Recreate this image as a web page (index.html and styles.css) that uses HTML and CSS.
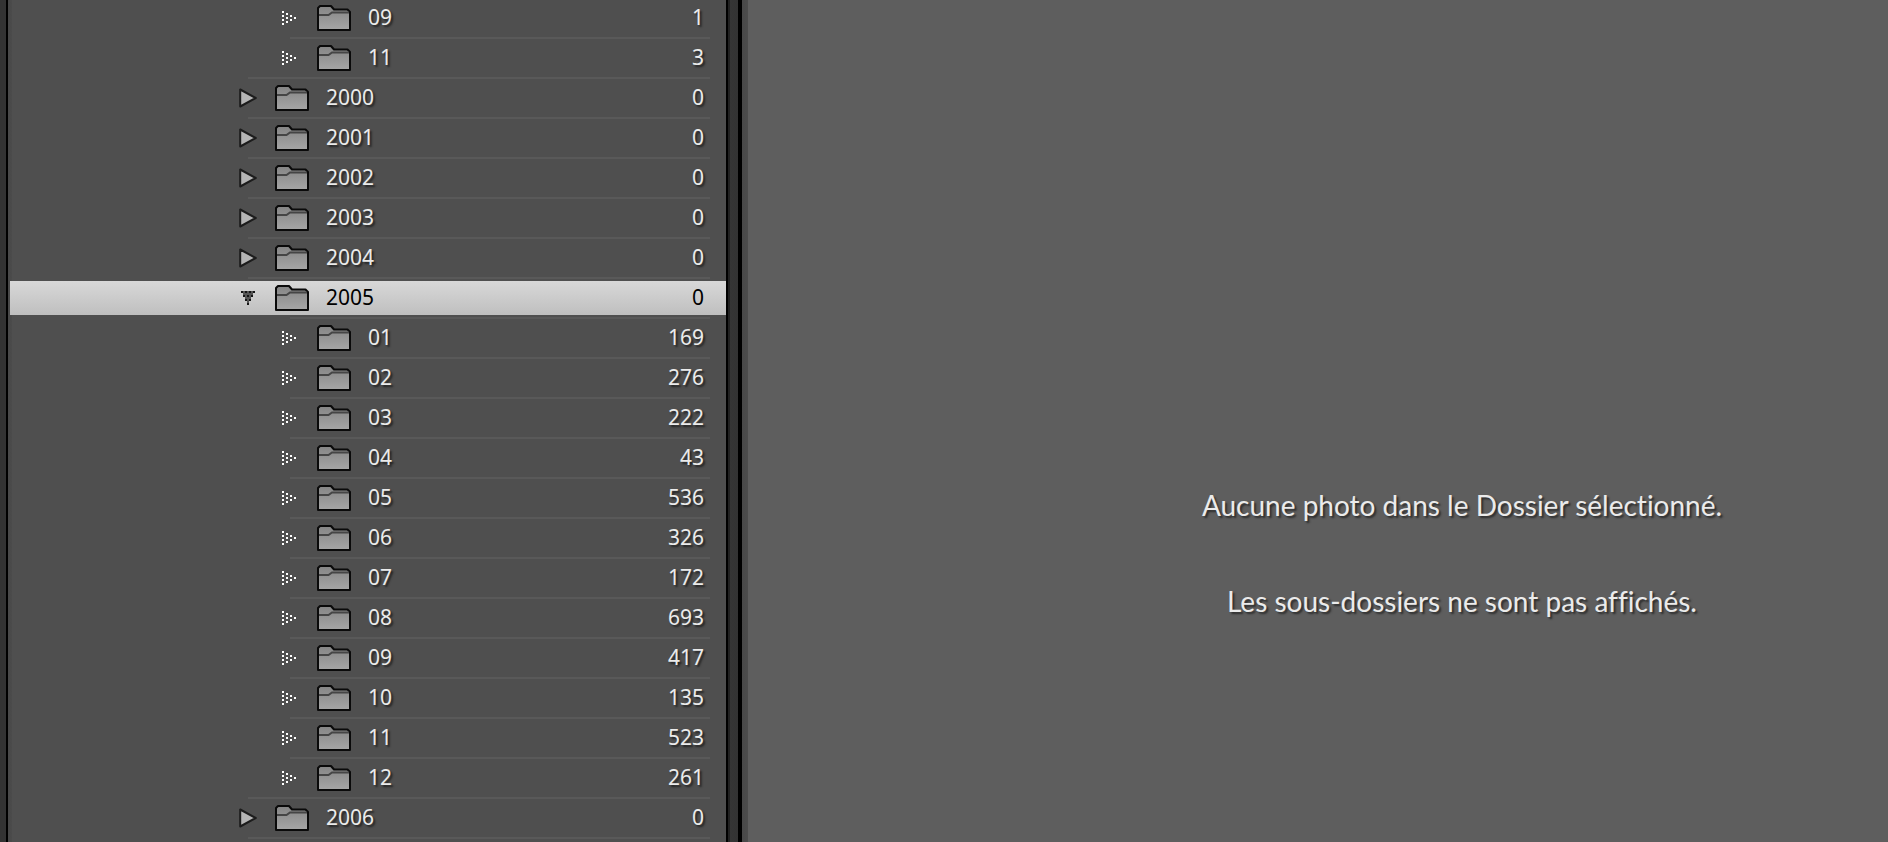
FILE: index.html
```html
<!DOCTYPE html>
<html lang="fr">
<head>
<meta charset="utf-8">
<title>Dossiers</title>
<link rel="stylesheet" href="styles.css">
</head>
<body>
<svg class="defs" aria-hidden="true">
  <defs>
    <linearGradient id="fill" x1="0" y1="0" x2="0" y2="1">
      <stop offset="0" stop-color="#858585"/>
      <stop offset="1" stop-color="#a6a6a6"/>
    </linearGradient>
    <symbol id="folder" viewBox="0 0 34 26">
      <path d="M1 3L3 1H14L17 4.500H30.500L33 7V25H1Z" fill="url(#fill)" stroke="#0a0a0a" stroke-width="2" stroke-linejoin="round"/>
      <path d="M2 10H11.500L15 7.500H32" fill="none" stroke="#454545" stroke-width="2"/>
    </symbol>
    <symbol id="closed" viewBox="0 0 18 20">
      <path d="M1.200 1.500V18.500L16.800 10Z" fill="#b4b4b4" stroke="#1c1c1c" stroke-width="2" stroke-linejoin="round"/>
    </symbol>
    <symbol id="leaf" viewBox="0 0 14 14">
      <path d="M0 0h2v2h-2zM0 4h2v2h-2zM0 8h2v2h-2zM0 12h2v2h-2zM4 2h2v2h-2zM4 6h2v2h-2zM4 10h2v2h-2zM8 4h2v2h-2zM8 8h2v2h-2zM12 6h2v2h-2z" fill="#fff"/>
    </symbol>
    <symbol id="open" viewBox="0 0 14 14">
      <path d="M0 0H14V2H12V6H10V10H8V14H6V10H4V6H2V2H0Z" fill="#555"/>
      <path d="M0 0h2v2h-2zM4 0h2v2h-2zM8 0h2v2h-2zM12 0h2v2h-2zM2 4h2v2h-2zM6 4h2v2h-2zM10 4h2v2h-2zM4 8h2v2h-2zM8 8h2v2h-2zM6 12h2v2h-2z" fill="#161616"/>
    </symbol>
  </defs>
</svg>
<div class="app">
  <nav class="panel" aria-label="Dossiers"><ul class="tree" id="tree"></ul></nav>
  <div class="divider"></div>
  <main class="content">
    <p>Aucune photo dans le Dossier sélectionné.</p>
    <p>Les sous-dossiers ne sont pas affichés.</p>
  </main>
</div>
<script src="tree.js"></script>
</body>
</html>
```
FILE: tree.js
```js
const rows = [
  ["leaf", "09", 1], ["leaf", "11", 3],
  ["closed", "2000", 0], ["closed", "2001", 0], ["closed", "2002", 0],
  ["closed", "2003", 0], ["closed", "2004", 0], ["open", "2005", 0],
  ["leaf", "01", 169], ["leaf", "02", 276], ["leaf", "03", 222],
  ["leaf", "04", 43], ["leaf", "05", 536], ["leaf", "06", 326],
  ["leaf", "07", 172], ["leaf", "08", 693], ["leaf", "09", 417],
  ["leaf", "10", 135], ["leaf", "11", 523], ["leaf", "12", 261],
  ["closed", "2006", 0]
];
document.getElementById("tree").innerHTML = rows.map(([kind, name, count]) => `
  <li class="item ${kind}">
    <button class="row" type="button">
      <span class="toggle"><svg class="${kind}-icon"><use href="#${kind}"/></svg></span>
      <svg class="folder"><use href="#folder"/></svg>
      <span class="name">${name}</span>
      <span class="count">${count}</span>
    </button>
  </li>`).join("");
```
FILE: styles.css
```css
* { box-sizing: border-box; }
body {
  margin: 0;
  background: #5e5e5e;
  color: #ebebeb;
  font-family: "Noto Sans", "Open Sans", sans-serif;
}
.defs { position: absolute; width: 0; height: 0; }
.app {
  display: grid;
  grid-template-columns: 726px 22px 1fr;
  height: 100vh;
  overflow: hidden;
}
.panel {
  overflow: hidden;
  padding-left: 10px;
  background: linear-gradient(90deg, #333 6px, #000 6px, #000 8px, #484848 8px, #4b4b4b 12px, #4f4f4f 12px);
}
.tree { list-style: none; margin: -3px 0 0; padding: 0; }
.item::before,
.tree::after {
  content: "";
  display: block;
  height: 2px;
  margin: 0 16px 0 238px;
  background: #595959;
}
.item.leaf::before { margin-left: 280px; }
.row {
  display: flex;
  align-items: center;
  width: 100%;
  height: 34px;
  margin: 2px 0;
  padding: 0 22px 0 228px;
  border: 0;
  background: none;
  color: inherit;
  font: inherit;
  font-size: 21px;
  line-height: 32px;
  text-align: left;
  text-shadow: 2px 2px 2px #222;
}
.leaf .row { padding-left: 270px; }
.open .row {
  background: linear-gradient(#d8d8d8, #bfbfbf);
  color: #000;
  text-shadow: none;
}
.toggle { display: flex; width: 37px; }
.toggle svg { width: 14px; height: 14px; margin-left: 3px; }
.toggle .leaf-icon { margin-left: 2px; }
.toggle .closed-icon { width: 18px; height: 20px; margin-left: 1px; }
.folder { width: 34px; height: 26px; margin-right: 17px; }
.name { flex: 1; }
.name, .count { padding-bottom: 2px; }
.divider {
  background: linear-gradient(90deg, #000 2px, #222 2px, #222 4px, #353535 4px, #333 12px, #000 12px, #000 16px, #484848 16px, #4c4c4c 22px);
}
.content {
  display: flex;
  flex-direction: column;
  align-items: center;
  justify-content: center;
  gap: 56px;
  padding: 264px 0 0 288px;
  font-family: Lato, "Noto Sans", sans-serif;
  font-size: 28px;
  font-variant-ligatures: none;
  line-height: 40px;
  text-align: center;
  text-shadow: 2px 2px 2px #2c2c2c;
}
.content p { margin: 0; }
```
